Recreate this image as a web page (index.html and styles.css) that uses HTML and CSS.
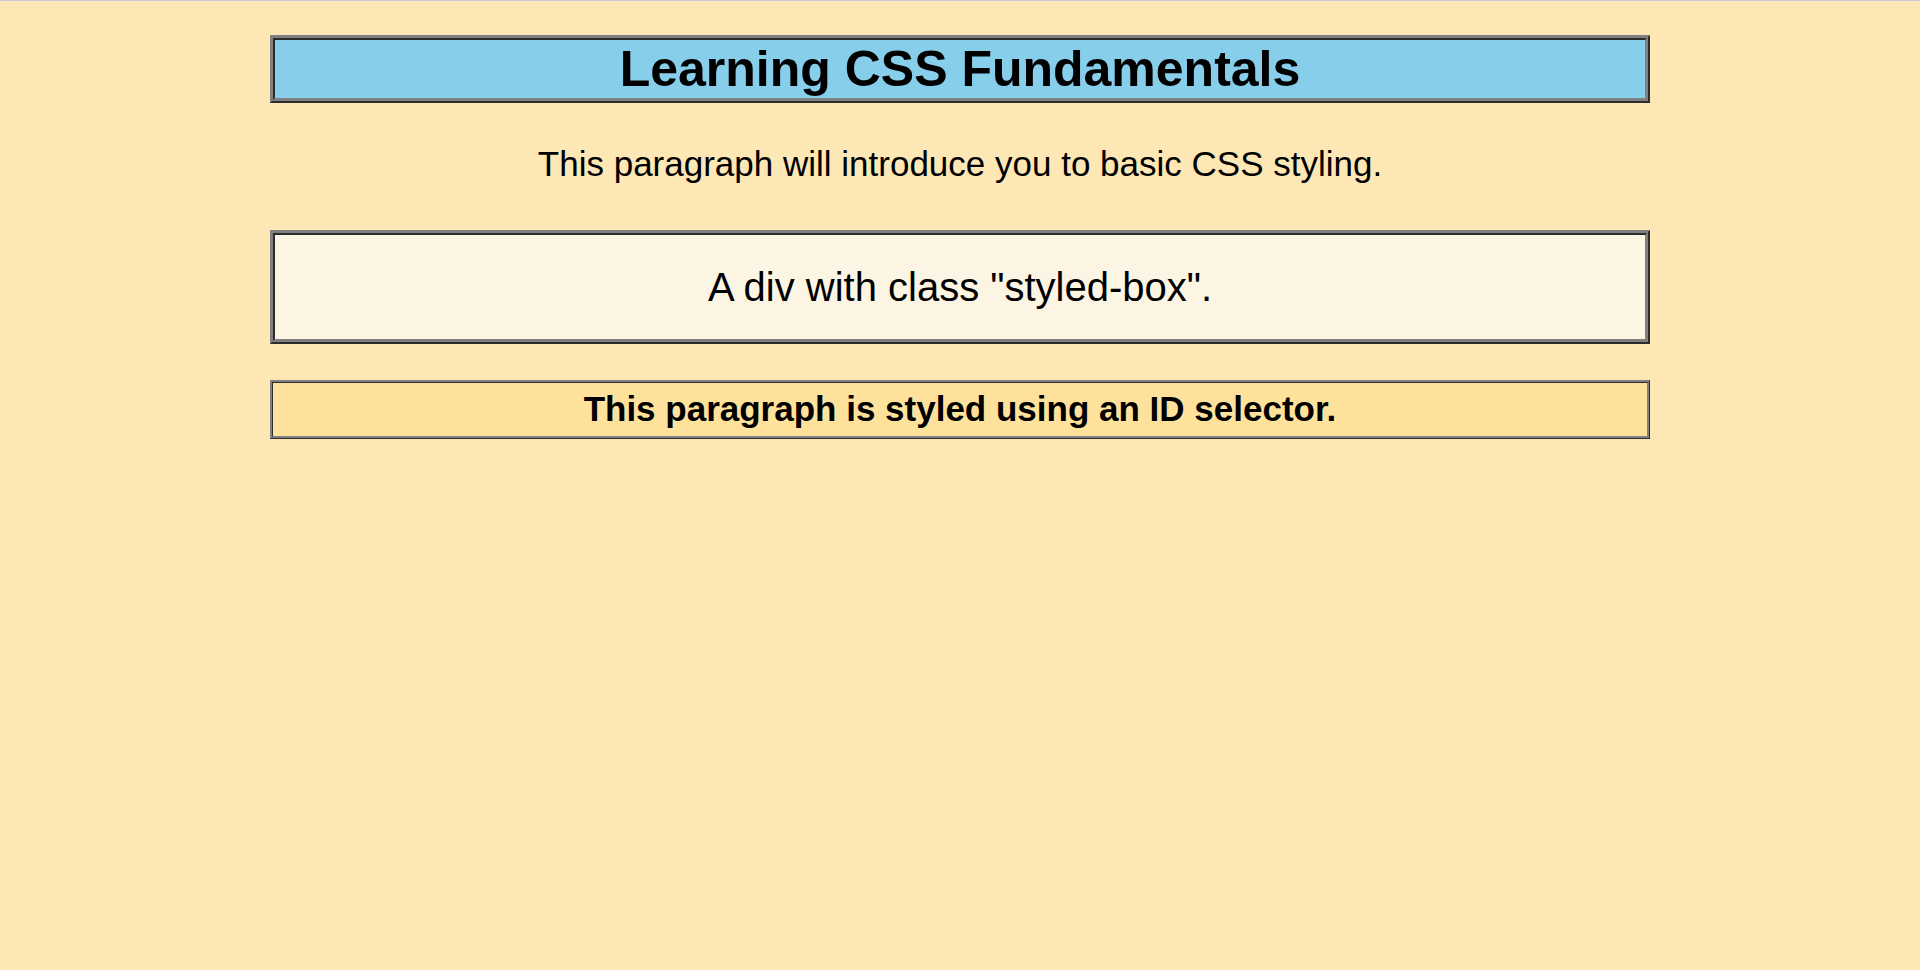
FILE: index.html
```html
<!DOCTYPE html>
<html lang="en">
<head>
<meta charset="utf-8">
<title>Learning CSS Fundamentals</title>
<link rel="stylesheet" href="styles.css">
</head>
<body>
<div class="container">
  <h1 class="title">Learning CSS Fundamentals</h1>
  <p class="intro">This paragraph will introduce you to basic CSS styling.</p>
  <div class="styled-box">A div with class "styled-box".</div>
  <p class="id-para">This paragraph is styled using an ID selector.</p>
</div>
</body>
</html>
```

FILE: styles.css
```css
html, body {
  margin: 0;
  padding: 0;
}

body {
  background: #fce7b5;
  border-top: 1px solid #c9cadf;
  font-family: "Liberation Sans", Arial, sans-serif;
  color: #000;
  min-height: 969px;
}

.container {
  width: 1380px;
  margin: 0 auto;
  padding-top: 34px;
  display: flex;
  flex-direction: column;
}

.title {
  margin: 0;
  background: #87ceeb;
  border: 5px ridge #808080;
  font-size: 50px;
  font-weight: bold;
  line-height: 58px;
  text-align: center;
}

.intro {
  margin: 41px 0 0;
  font-size: 35px;
  line-height: 40px;
  text-align: center;
}

.styled-box {
  margin-top: 46px;
  background: #fdf5e4;
  border: 5px ridge #808080;
  padding: 29px 0;
  font-size: 40px;
  line-height: 46px;
  text-align: center;
}

.id-para {
  margin: 36px 0 0;
  background: #fee29c;
  border: 3px ridge #808080;
  padding: 6px 0 7px;
  font-size: 35px;
  font-weight: bold;
  line-height: 40px;
  text-align: center;
}
```
